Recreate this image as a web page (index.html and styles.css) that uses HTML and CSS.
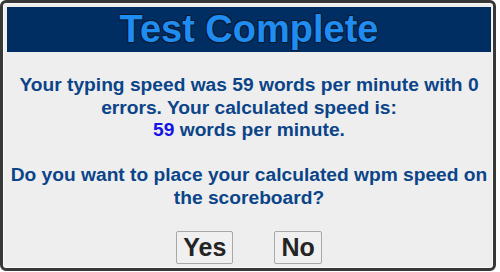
FILE: index.html
```html
<!DOCTYPE html>
<html lang="en">
<head>
  <meta charset="UTF-8" />
  <meta name="viewport" content="width=device-width, initial-scale=1.0" />
  <title>Test Complete</title>
  <link rel="stylesheet" href="styles.css">
</head>
<body>
  <!-- Result dialog -->
  <div class="dialog">
    <div class="dialog-header">
      <h1>Test Complete</h1>
    </div>

    <div class="dialog-body">
      <p>
        Your typing speed was 59 words per minute with 0 errors. Your calculated speed is:<br>
        <span class="calc-speed">59</span> words per minute.<br><br>
        Do you want to place your calculated wpm speed on the scoreboard?
      </p>
    </div>

    <div class="dialog-buttons">
      <button class="dialog-button" id="yesButton">Yes</button>
      <button class="dialog-button" id="noButton">No</button>
    </div>
  </div>
</body>
</html>
```

FILE: styles.css
```css
body {
  font-family: "Liberation Sans", Arial, sans-serif;
  margin: 0;
  padding: 0;
  background-color: #fff;
}
.dialog {
  box-sizing: border-box;
  width: 496px;
  height: 271px;
  padding: 4px 2px 4px 4px;
  background-color: #eeeeee;
  border: 3px solid #383838;
  border-radius: 6px;
  box-shadow: inset 0 0 0 1px #fafafa;
}
.dialog-header {
  background-color: #002d62;
  height: 45px;
  display: flex;
  align-items: center;
  justify-content: center;
}
.dialog-header h1 {
  margin: 0;
  font-size: 38px;
  font-weight: bold;
  color: #1e8cf0;
  text-shadow: -1px -1px 0 #0b1a30, 1px -1px 0 #0b1a30, -1px 1px 0 #0b1a30, 1px 1px 0 #0b1a30;
}
.dialog-body {
  margin-top: 22px;
}
.dialog-body p {
  margin: 0;
  text-align: center;
  font-size: 19.2px;
  line-height: 22.5px;
  font-weight: bold;
  color: #0b4488;
}
.calc-speed {
  color: #1414e6;
}
.dialog-buttons {
  display: flex;
  justify-content: center;
  gap: 41px;
  margin-top: 22px;
}
.dialog-button {
  font-family: "Liberation Sans", Arial, sans-serif;
  font-size: 25px;
  font-weight: bold;
  color: #242424;
  background-color: #f0f0f0;
  border: 1px solid #a8a8a8;
  border-radius: 2px;
  height: 33px;
  padding: 0 6px;
  line-height: 31px;
  cursor: pointer;
}
```
